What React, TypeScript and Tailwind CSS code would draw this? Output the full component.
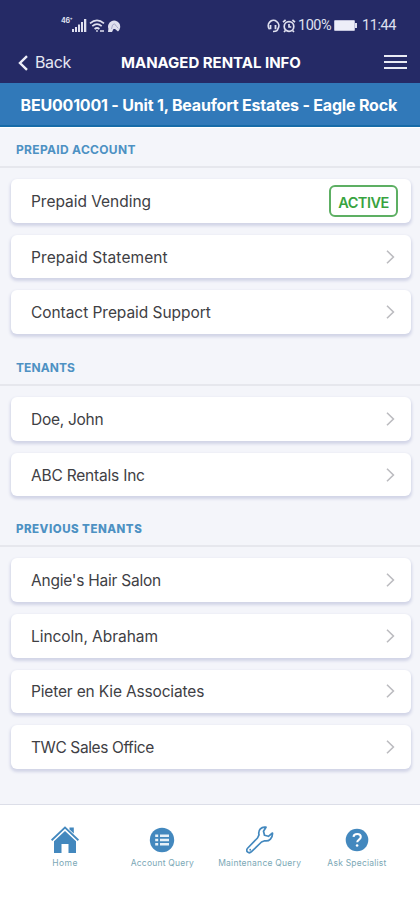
import type { ReactNode } from 'react';

function Chevron() {
  return (
    <svg width="9" height="14" viewBox="0 0 9 14" fill="none" stroke="#bcbcc0" strokeWidth="1.6">
      <path d="M1 .8 7.4 7 1 13.2" />
    </svg>
  );
}

function Row({ label, spacing, active }: { label: string; spacing: string; active?: boolean }) {
  return (
    <div className="flex h-[43.7px] items-center justify-between rounded-[6px] bg-white pl-5 pr-4 shadow-[0_2px_3px_1px_#d2d5e7]">
      <span className={`whitespace-nowrap pt-[2px] text-[15.5px] leading-5 text-[#404044] ${spacing}`}>{label}</span>
      {active ? (
        <span className="-mr-[3px] flex h-8 w-[69px] items-center justify-center rounded-[6px] border-2 border-[#5daf63] pt-1 text-[14.5px] font-semibold tracking-[-0.5px] text-[#38a33f]">
          ACTIVE
        </span>
      ) : (
        <Chevron />
      )}
    </div>
  );
}

function Section({ title, className, children }: { title: string; className: string; children: ReactNode }) {
  return (
    <section>
      <h2 className={`flex items-center border-b-2 border-[#e6e7ed] pl-4 text-[#4d91c3] ${className}`}>
        <span className="whitespace-nowrap">{title}</span>
      </h2>
      <div className="flex flex-col gap-3 px-[11px] pb-3 pr-[9px] pt-[11px]">{children}</div>
    </section>
  );
}

function StatusBar() {
  return (
    <div className="flex h-[46px] items-center pl-[61px] pr-[22px] pt-[5px] text-[#dfe0ef]">
      <span className="-mt-2 text-[7px] font-bold tracking-tighter">46⁺</span>
      <svg className="-ml-[1px]" width="15" height="13" viewBox="0 0 15 13" fill="currentColor">
        <path d="M0 10h2v3H0zM3 8h2v5H3zM6 5.5h2V13H6zM9 3h2v10H9zM12 0h2.3v13H12z" />
      </svg>
      <svg className="ml-[2px]" width="17" height="14" viewBox="0 0 17 14" fill="none" stroke="currentColor" strokeWidth="1.7">
        <path d="M1 4.3Q8 -1.6 15 4.3M3.3 7.2q4.7-4 9.4 0M5.6 10q2.4-2 4.8 0" />
        <path d="M8 11.2v1.6M11 12h4" />
      </svg>
      <svg className="ml-[1px]" width="14" height="14" viewBox="0 0 14 14">
        <path d="M1 13 1.4 9.8A6.1 6.1 0 1 1 11 12.4L8 10 6.5 10 5 13Z" fill="#dfe0ef" />
        <path d="m4.5 10 1-4 2-1.2 2 2.6 1.8 2" fill="none" stroke="#a9abc9" />
      </svg>
      <svg className="ml-auto" width="14" height="14" viewBox="0 0 14 14" fill="none" stroke="currentColor" strokeWidth="1.7">
        <path d="M3.6 10.3A5.3 5.3 0 1 1 12 9.6Q11.4 12.6 7 12.5" />
        <path d="M4.5 6v4.3M9.5 6v4.3" strokeWidth="1.8" />
      </svg>
      <svg className="ml-[2px]" width="14" height="14" viewBox="0 0 14 14" fill="none" stroke="currentColor" strokeWidth="1.7">
        <circle cx="7" cy="7.5" r="4.8" />
        <path d="M7 5v3h2.3M1 3.2 3.6 1M13 3.2 10.4 1M3.5 11.5 2 13M10.5 11.5 12 13" />
      </svg>
      <span className="ml-[2px] w-[34px] whitespace-nowrap font-[Roboto,sans-serif] text-[14.5px] tracking-[-0.5px]">100%</span>
      <span className="ml-[2px] h-[11px] w-[21px] rounded-[1px] border border-[#c2c3da] bg-[#edeef8]" />
      <span className="h-[5px] w-[2px] bg-[#dfe0ef]" />
      <span className="ml-[5px] w-[36px] whitespace-nowrap font-[Roboto,sans-serif] text-[14.5px] tracking-[-0.4px]">11:44</span>
    </div>
  );
}

function Tab({ label, className, children }: { label: string; className: string; children: ReactNode }) {
  return (
    <div className="flex w-[97.3px] flex-col items-center">
      <div className="flex h-[28px] items-center justify-center">{children}</div>
      <span className={`mt-[4px] whitespace-nowrap text-[8.5px] leading-[11px] text-[#7ba8b6] ${className}`}>{label}</span>
    </div>
  );
}

export default function App() {
  return (
    <div className="flex h-[900px] w-[420px] flex-col overflow-hidden bg-[#f4f5fa] font-[Inter,sans-serif]">
      <header className="h-[83px] shrink-0 bg-[#252a66]">
        <StatusBar />
        <div className="grid h-[33px] grid-cols-[121px_1fr_36px] items-center text-white">
          <div className="flex items-center pl-[18px]">
            <svg width="10" height="16" viewBox="0 0 10 16" fill="none" stroke="#edeef8" strokeWidth="2.4">
              <path d="M9 1.2 2 8l7 6.8" />
            </svg>
            <span className="-mt-px ml-[7px] text-base leading-5 tracking-[-0.35px] text-[#e5e6f2]">Back</span>
          </div>
          <h1 className="whitespace-nowrap text-[15px] font-bold leading-5 tracking-[-0.02px]">MANAGED RENTAL INFO</h1>
          <div className="-mt-[2px] flex w-[23px] flex-col gap-[4px]">
            <span className="h-[2px] bg-[#e9eaf4]" />
            <span className="h-[2px] bg-[#e9eaf4]" />
            <span className="h-[2px] bg-[#e9eaf4]" />
          </div>
        </div>
      </header>
      <div className="flex h-[44px] shrink-0 items-center whitespace-nowrap border-b-2 border-[#176ba8] bg-[#3179b9] pl-[20.5px] pt-px text-base font-bold tracking-[-0.19px] text-white">
        BEU001001 - Unit 1, Beaufort Estates - Eagle Rock
      </div>
      <main className="h-[677px] shrink-0 border-t border-white">
        <Section title="PREPAID ACCOUNT" className="h-10 pt-[6px] text-xs font-bold tracking-[0.32px]">
          <Row label="Prepaid Vending" spacing="tracking-[-0.03px]" active />
          <Row label="Prepaid Statement" spacing="tracking-[0.1px]" />
          <Row label="Contact Prepaid Support" spacing="tracking-[-0.05px]" />
        </Section>
        <Section title="TENANTS" className="h-10 pt-[5px] text-xs font-bold tracking-[0.08px]">
          <Row label="Doe, John" spacing="tracking-[-0.28px]" />
          <Row label="ABC Rentals Inc" spacing="tracking-[-0.2px]" />
        </Section>
        <Section title="PREVIOUS TENANTS" className="h-[38.75px] pt-[6.5px] text-[11.5px] font-extrabold tracking-[0.5px]">
          <Row label="Angie's Hair Salon" spacing="tracking-[-0.23px]" />
          <Row label="Lincoln, Abraham" spacing="tracking-[-0.05px]" />
          <Row label="Pieter en Kie Associates" spacing="tracking-[-0.16px]" />
          <Row label="TWC Sales Office" spacing="tracking-[-0.4px]" />
        </Section>
      </main>
      <nav className="flex flex-1 justify-center border-t border-[#dcdee8] bg-white pl-[2px] pt-[21px]">
        <Tab label="Home" className="tracking-[0.4px]">
          <svg width="28" height="28" viewBox="0 0 28 28" fill="#4388be">
            <path d="M14 .2 28 13.6l-1.2 1.3L14 2.8 1.2 14.9 0 13.6Z" />
            <path d="M18.5 1.5h4.3v6l-4.3-4Z" />
            <path d="M14 5 25 15.3V27h-7.5v-9h-7v9H3V15.3Z" />
          </svg>
        </Tab>
        <Tab label="Account Query" className="tracking-[0.22px]">
          <svg width="26" height="26" viewBox="0 0 26 26">
            <circle cx="13" cy="13" r="12.2" fill="#4388be" />
            <path d="M6.2 7.4h3v2.6h-3zm4.8 0h9v2.6h-9zm-4.8 4.3h3v2.6h-3zm4.8 0h9v2.6h-9zm-4.8 4.3h3v2.6h-3zm4.8 0h9v2.6h-9z" fill="#e7f1f8" />
          </svg>
        </Tab>
        <Tab label="Maintenance Query" className="tracking-[0.25px]">
          <svg width="28" height="28" viewBox="0 0 28 28" fill="none" stroke="#4388be" strokeWidth="1.7" strokeLinejoin="round">
            <path d="M20 1.2C15.5.2 11.8 4.2 13 8.8L11.5 12 1.8 22c-3 3 .9 6.3 3.7 3.7L15.5 16l3.2-1.2c4.5 1 8.2-3.1 7.8-7.8L22.4 10.3 18.5 9.2 17.5 5.2Z" />
            <path d="M4.2 23.6v.2" strokeLinecap="round" />
          </svg>
        </Tab>
        <Tab label="Ask Specialist" className="tracking-[0.22px]">
          <svg width="24" height="24" viewBox="0 0 24 24">
            <circle cx="12" cy="12" r="11.3" fill="#4388be" />
            <path d="M8.5 8.8C8.8 5.2 15.8 5 15.8 9c0 2.5-3.6 2.7-3.6 5.3" fill="none" stroke="white" strokeWidth="2" />
            <circle cx="12.1" cy="17.5" r="1.3" fill="white" />
          </svg>
        </Tab>
      </nav>
    </div>
  );
}
